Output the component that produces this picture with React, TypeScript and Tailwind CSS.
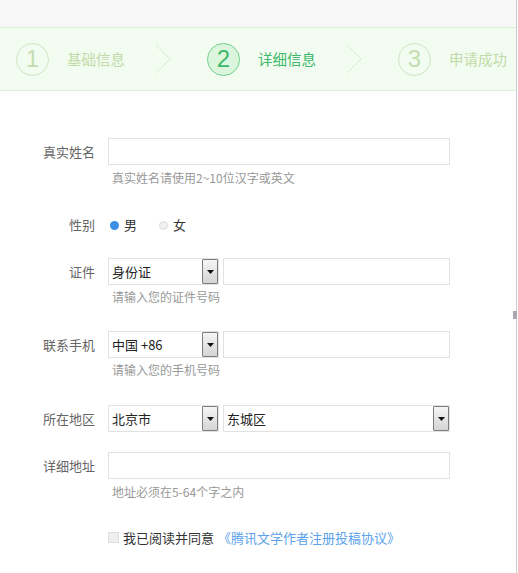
import type { ReactNode } from 'react'

const FONT = { fontFamily: '"Noto Sans CJK SC", "Microsoft YaHei", sans-serif' }

function StepCircle({ n, active }: { n: number; active?: boolean }) {
  return (
    <div
      className={`flex h-[33px] w-[33px] shrink-0 items-center justify-center rounded-full border text-[24px] font-light leading-none ${
        active ? 'border-[#6fd08c] bg-[#dcf6de] text-[#3cb868]' : 'border-[#cfe5c0] text-[#c3deb0]'
      }`}
      style={{ fontFamily: '"Liberation Sans", Arial, sans-serif' }}
    >
      {n}
    </div>
  )
}

function Chevron() {
  return (
    <svg width="16" height="30" viewBox="0 0 16 30" className="ml-[30px] mr-[36px] shrink-0">
      <polyline points="1,1 15,15 1,29" fill="none" stroke="#dbead2" strokeWidth="1" />
    </svg>
  )
}

function Steps() {
  return (
    <div className="flex h-[64px] items-center border-b border-t border-[#ddeed6] bg-[#f3fcf0] pl-4">
      <StepCircle n={1} />
      <span className="ml-[18px] text-[14.5px] text-[#c0dba9]">基础信息</span>
      <Chevron />
      <StepCircle n={2} active />
      <span className="ml-[18px] text-[14.5px] text-[#3eb96b]">详细信息</span>
      <Chevron />
      <StepCircle n={3} />
      <span className="ml-[18px] text-[14.5px] text-[#c0dba9]">申请成功</span>
    </div>
  )
}

function Row({ label, children, className = '' }: { label: string; children: ReactNode; className?: string }) {
  return (
    <div className={`flex items-center ${className}`}>
      <div className="w-[95px] shrink-0 text-right text-[13px] text-[#666]">{label}</div>
      <div className="ml-[13px] flex items-center">{children}</div>
    </div>
  )
}

function Hint({ children, className = '' }: { children: ReactNode; className?: string }) {
  return <div className={`pl-[112px] text-[12px] leading-4 text-[#999] ${className}`}>{children}</div>
}

function TextInput({ w }: { w: string }) {
  return <div className={`h-[27px] border border-[#e2e2e2] bg-white ${w}`} />
}

function Select({ value, w }: { value: string; w: string }) {
  return (
    <div className={`flex h-[27px] items-stretch border border-[#e2e2e2] bg-white ${w}`}>
      <span className="flex flex-1 items-center pl-[3px] text-[13px] text-[#222]">{value}</span>
      <span className="flex w-[16px] items-center justify-center rounded-[1px] border border-[#7d7d7d] bg-gradient-to-b from-[#f6f6f6] to-[#d4d4d4]">
        <svg width="7" height="4" viewBox="0 0 7 4">
          <polygon points="0,0 7,0 3.5,4" fill="#111" />
        </svg>
      </span>
    </div>
  )
}

function Radio({ checked, label }: { checked?: boolean; label: string }) {
  return (
    <span className="flex items-center">
      <span className={`h-[9px] w-[9px] rounded-full ${checked ? 'bg-[#3d8fe6]' : 'border border-[#dcdcdc] bg-[#f0f0f0]'}`} />
      <span className="ml-[5px] text-[13px] text-[#333]">{label}</span>
    </span>
  )
}

export default function App() {
  return (
    <div className="relative h-[573px] w-[518px] overflow-hidden bg-white" style={FONT}>
      <div className="h-[573px] w-[517px] border-r border-[#cfcfcf]">
        <div className="h-[27px] bg-[#f8f8f8]" />
        <Steps />

        <div className="pt-[47px]">
          <Row label="真实姓名">
            <TextInput w="w-[342px]" />
          </Row>
          <Hint className="mt-[5px]">真实姓名请使用2~10位汉字或英文</Hint>

          <Row label="性别" className="mt-[31px] h-[16px]">
            <span className="ml-[2px] flex items-center gap-[22px]">
              <Radio checked label="男" />
              <Radio label="女" />
            </span>
          </Row>

          <Row label="证件" className="mt-[25px]">
            <Select value="身份证" w="w-[111px]" />
            <span className="ml-[4px]">
              <TextInput w="w-[227px]" />
            </span>
          </Row>
          <Hint className="mt-[4px]">请输入您的证件号码</Hint>

          <Row label="联系手机" className="mt-[26px]">
            <Select value="中国 +86" w="w-[111px]" />
            <span className="ml-[4px]">
              <TextInput w="w-[227px]" />
            </span>
          </Row>
          <Hint className="mt-[4px]">请输入您的手机号码</Hint>

          <Row label="所在地区" className="mt-[27px]">
            <Select value="北京市" w="w-[111px]" />
            <span className="ml-[4px]">
              <Select value="东城区" w="w-[227px]" />
            </span>
          </Row>

          <Row label="详细地址" className="mt-[20px]">
            <TextInput w="w-[342px]" />
          </Row>
          <Hint className="mt-[5px]">地址必须在5-64个字之内</Hint>

          <div className="mt-[28px] flex items-center pl-[108px] text-[13px]">
            <span className="h-[11px] w-[11px] border border-[#dedede] bg-[#efefef]" />
            <span className="ml-[4px] text-[#333]">我已阅读并同意</span>
            <span className="ml-[4px] text-[#5ba2ea]">《腾讯文学作者注册投稿协议》</span>
          </div>
        </div>
      </div>
      <div className="absolute left-[513px] top-[311px] h-[8px] w-[4px] bg-[#a8a8b0]" />
    </div>
  )
}
